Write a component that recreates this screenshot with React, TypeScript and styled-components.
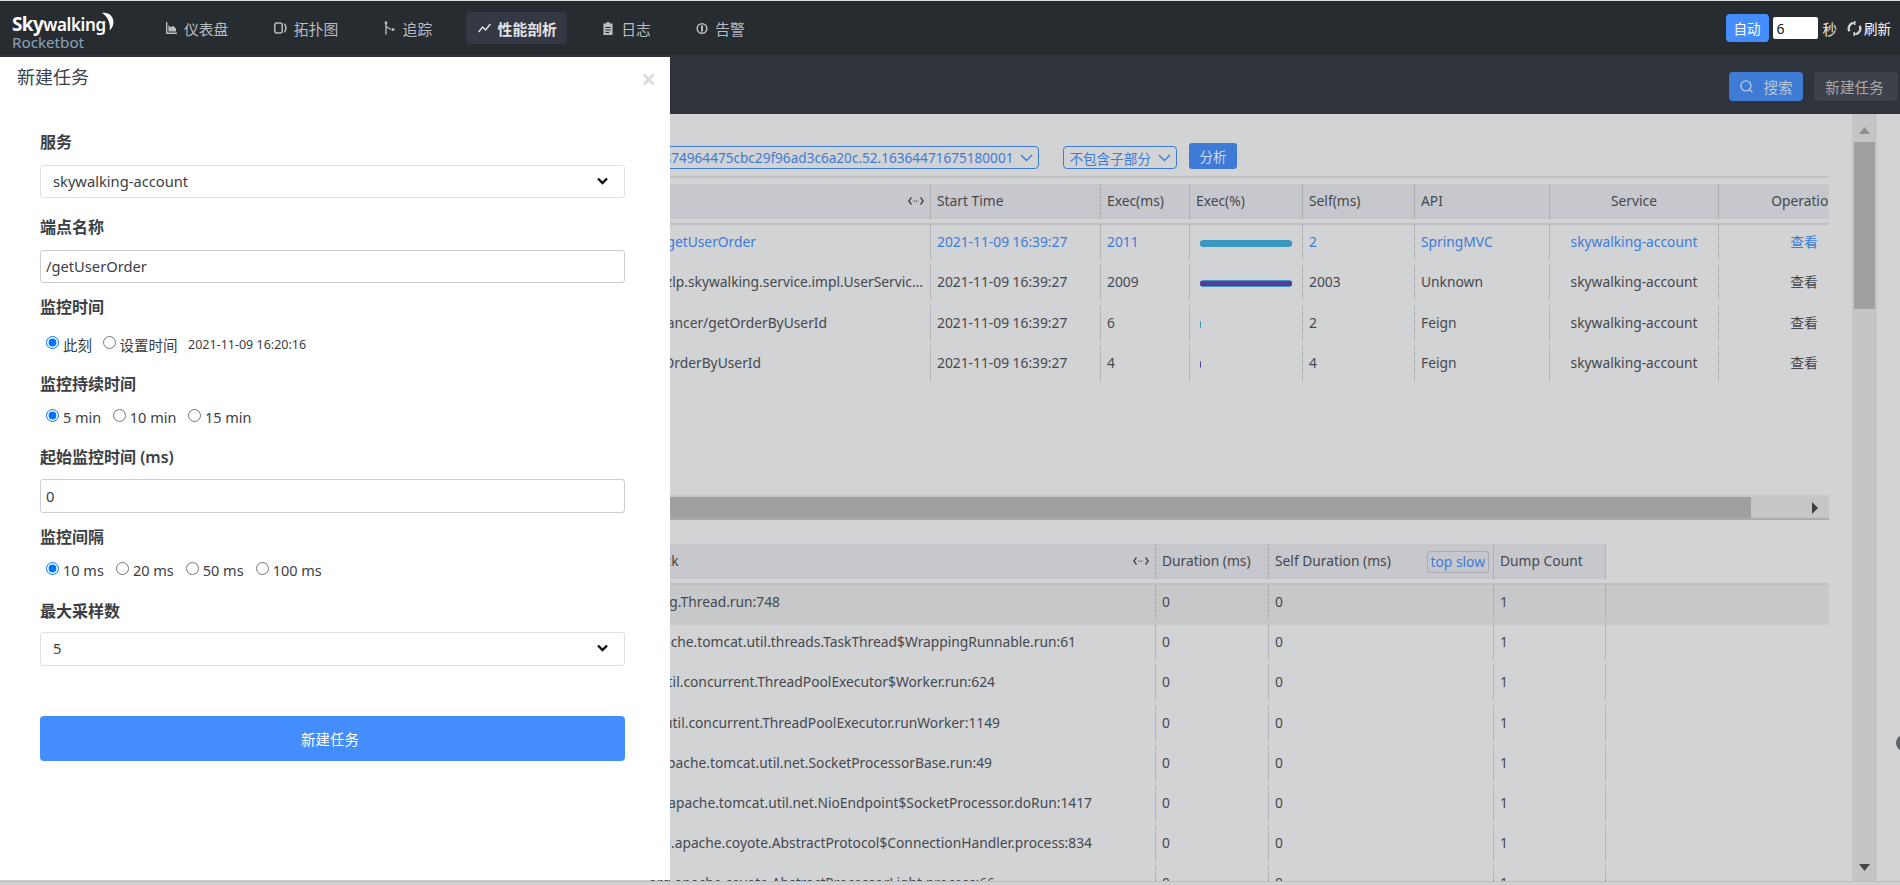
import React from "react";
import styled, { createGlobalStyle } from "styled-components";
import { Search } from "lucide-react";

const FONT = `"Noto Sans", "Noto Sans CJK SC", sans-serif`;

const Global = createGlobalStyle`
  html, body { margin: 0; padding: 0; height: 100%; overflow: hidden; }
  body { font-family: ${FONT}; }
  * { box-sizing: border-box; }
`;

const Page = styled.div`
  position: relative;
  width: 1900px;
  height: 885px;
  overflow: hidden;
  display: flex;
  flex-direction: column;
  background: #d2d3d5;
`;

/* ---------- top navigation ---------- */
const NavBar = styled.header`
  height: 55px;
  flex: none;
  background: #272c31;
  border-top: 1px solid #dcdcdc;
  display: flex;
  align-items: center;
  padding: 0 9px 0 12px;
`;
const Logo = styled.div`
  position: relative;
  width: 100px;
  margin-right: 41px;
  display: flex;
  flex-direction: column;
  padding-top: 6px;
`;
const LogoName = styled.div`
  font-size: 19px;
  font-weight: 700;
  color: #fff;
  line-height: 20px;
  letter-spacing: -0.6px;
  white-space: nowrap;
  small { font-size: 17px; font-weight: 600; letter-spacing: -0.4px; }
`;
const LogoSub = styled.div`
  font-size: 15.2px;
  line-height: 14px;
  color: #8ba3ba;
  white-space: nowrap;
`;
const Moon = styled.svg`
  position: absolute;
  right: -2px;
  top: 4px;
`;
const NavList = styled.nav`
  display: flex;
  gap: 23.4px;
  flex: 1;
`;
const NavItem = styled.a<{ $active?: boolean }>`
  height: 32px;
  display: flex;
  align-items: center;
  gap: 7px;
  padding: 0 10px 0 12px;
  border-radius: 4px;
  font-size: 14.8px;
  color: ${(p) => (p.$active ? "#e2e3e5" : "#b9bbbe")};
  font-weight: ${(p) => (p.$active ? 600 : 400)};
  background: ${(p) => (p.$active ? "#333844" : "transparent")};
  white-space: nowrap;
`;
const AutoButton = styled.button`
  width: 43px;
  height: 28px;
  border: 0;
  border-radius: 4px;
  background: #448dfe;
  color: #fff;
  font: 13.500px ${FONT};
  padding: 0;
`;
const SecondsInput = styled.input`
  width: 45px;
  height: 22px;
  margin-left: 4px;
  border: 0;
  border-radius: 2px;
  padding: 0 4px;
  background: #fff;
  color: #111;
  font: 14px ${FONT};
  outline: none;
`;
const Unit = styled.span`
  margin-left: 5px;
  font-size: 14.500px;
  color: #e6e6e6;
`;
const Refresh = styled.span`
  margin-left: 10px;
  display: flex;
  align-items: center;
  gap: 2px;
  font-size: 13.500px;
  color: #fff;
`;

/* ---------- second toolbar ---------- */
const ToolBar = styled.div`
  height: 59px;
  flex: none;
  background: #2f343c;
  display: flex;
  align-items: flex-start;
  justify-content: flex-end;
  gap: 11px;
  padding: 17px 2px 0 0;
`;
const ToolButton = styled.button<{ $primary?: boolean }>`
  height: 29px;
  width: ${(p) => (p.$primary ? 74 : 84)}px;
  border: 0;
  border-radius: 4px;
  background: ${(p) => (p.$primary ? "#3d7bd5" : "#3d414a")};
  color: ${(p) => (p.$primary ? "#b9c6da" : "#a6a8ac")};
  font: 14.6px ${FONT};
  display: flex;
  align-items: center;
  justify-content: center;
  gap: 9px;
  padding: ${(p) => (p.$primary ? "0" : "0 3px 0 0")};
`;

/* ---------- main area ---------- */
const Main = styled.main`
  flex: 1;
  min-height: 0;
  display: flex;
`;
const Content = styled.div`
  width: 1829px;
  min-width: 0;
  padding-left: 20px;
  overflow: hidden;
`;
const SelectRow = styled.div`
  height: 64px;
  border-bottom: 2px solid #bfc0c3;
  display: flex;
  align-items: flex-start;
  justify-content: flex-end;
  padding: 29px 592px 0 0;
`;
const Picker = styled.div<{ $gap: number }>`
  height: 23px;
  margin-top: 3px;
  margin-right: ${(p) => p.$gap}px;
  border: 1px solid #3d7bd5;
  border-radius: 4px;
  color: #3d7bd5;
  font-size: 13.600px;
  padding: 0 5px;
  display: flex;
  align-items: center;
  gap: 7px;
  white-space: nowrap;
`;
const AnalyzeButton = styled.button`
  width: 48px;
  height: 26px;
  border: 0;
  border-radius: 3px;
  background: #3d7bd5;
  color: #cfdbed;
  font: 13.600px ${FONT};
  padding: 0;
`;
const TablePane = styled.div<{ $height: number; $pad: number }>`
  height: ${(p) => p.$height}px;
  overflow: hidden;
  padding-top: ${(p) => p.$pad}px;
`;
const Grid = styled.div<{ $cols: string }>`
  display: grid;
  grid-template-columns: ${(p) => p.$cols};
  width: max-content;
`;
const HeadWrap = styled.div`
  height: 41px;
  border-bottom: 2px solid #bfc0c3;
  min-width: 1809px;
`;
const HeadCell = styled.div<{ $center?: boolean; $blank?: boolean }>`
  height: 35px;
  background: ${(p) => (p.$blank ? "transparent" : "#c7c8cd")};
  border-left: 1px dotted #97989b;
  color: #45484e;
  font-size: 13.800px;
  padding: 0 6px 2px;
  display: flex;
  align-items: center;
  justify-content: ${(p) => (p.$center ? "center" : "flex-start")};
  white-space: nowrap;
`;
const HeadMain = styled(HeadCell)<{ $lead: number }>`
  border-left: 0;
  justify-content: space-between;
  padding-left: ${(p) => p.$lead}px;
`;
const HeadWithButton = styled(HeadCell)`
  justify-content: space-between;
  padding-right: 4px;
`;
const TopSlow = styled.span`
  height: 22px;
  margin-top: 3px;
  padding: 0 3px;
  border: 1px solid #a7a9af;
  border-radius: 3px;
  color: #3d7bd5;
  font-size: 13.800px;
  line-height: 20px;
`;
const Row = styled.div<{ $cols: string; $active?: boolean; $hot?: boolean; $h: number }>`
  display: grid;
  grid-template-columns: ${(p) => p.$cols};
  width: max-content;
  min-width: 1809px;
  height: ${(p) => p.$h}px;
  color: ${(p) => (p.$active ? "#3d7bd5" : "#45484e")};
  background: ${(p) => (p.$hot ? "#c7c8ca" : "transparent")};
`;
const Cell = styled.div<{ $center?: boolean }>`
  height: 35px;
  border-left: 1px dotted #97989b;
  font-size: 13.800px;
  padding: 0 6px;
  line-height: 34px;
  white-space: nowrap;
  overflow: hidden;
  text-align: ${(p) => (p.$center ? "center" : "left")};
`;
const NameCell = styled.div<{ $end: number }>`
  height: 35px;
  font-size: 13.800px;
  line-height: 34px;
  white-space: nowrap;
  display: flex;
  justify-content: flex-end;
  padding-right: ${(p) => p.$end}px;
`;
const BarCell = styled(Cell)`
  display: flex;
  align-items: center;
  padding: 2px 0 0 10px;
`;
const BarTrack = styled.div`
  width: 92px;
  height: 7px;
`;
const BarValue = styled.div`
  min-width: 1px;
  height: 100%;
  padding: 1px 0;
  border-radius: 4px;
  overflow: hidden;
  background: #3a97bd;
`;
const BarCore = styled.div<{ $tone: string }>`
  height: 100%;
  background: ${(p) => p.$tone};
`;
const HScroll = styled.div`
  height: 25px;
  background: #c5c6c8;
  border-bottom: 2px solid #aaabad;
  padding-top: 2px;
  display: flex;
  align-items: flex-start;
`;
const HThumb = styled.div`
  width: 1731px;
  height: 21px;
  background: #9fa0a2;
`;
const HArrow = styled.svg`
  margin: 5px 0 0 61px;
`;
const VScroll = styled.div`
  width: 25px;
  margin-left: 23px;
  flex: none;
  background: #c4c5c7;
  padding: 13px 2px 0;
  display: flex;
  flex-direction: column;
  align-items: center;
`;
const VThumb = styled.div`
  width: 21px;
  height: 167px;
  margin-top: 8px;
  background: #9fa0a2;
`;
const VArrowDown = styled.svg`
  margin-top: auto;
  margin-bottom: 10px;
`;
const BottomStrip = styled.div`
  height: 4px;
  flex: none;
  background: #cfd0d2;
  border-top: 1px solid #bdbec0;
  position: relative;
  z-index: 3;
`;
const EdgeHandle = styled.div`
  position: absolute;
  left: 1896px;
  top: 735px;
  width: 16px;
  height: 16px;
  border-radius: 50%;
  background: #5d6368;
`;

/* ---------- drawer ---------- */
const Drawer = styled.aside`
  position: absolute;
  left: 0;
  top: 57px;
  width: 670px;
  height: 823px;
  background: #fff;
  z-index: 2;
  padding: 0 45px 0 40px;
`;
const DrawerHead = styled.div`
  height: 73px;
  margin: 0 -31px 0 -23px;
  display: flex;
  justify-content: space-between;
  align-items: flex-start;
  color: #3d4148;
`;
const DrawerTitle = styled.div`
  font-size: 18px;
  line-height: 40px;
`;
const Close = styled.span`
  font-size: 26px;
  font-weight: 700;
  line-height: 44px;
  color: #dcdcdc;
`;
const Label = styled.label<{ $mt: number }>`
  display: block;
  margin-top: ${(p) => p.$mt}px;
  height: 24px;
  font-size: 16px;
  line-height: 24px;
  font-weight: 600;
  color: #3a3e45;
  white-space: nowrap;
`;
const SelectBox = styled.div<{ $mt: number; $h: number }>`
  margin-top: ${(p) => p.$mt}px;
  height: ${(p) => p.$h}px;
  border: 1px solid #dfe0e2;
  border-radius: 3px;
  padding: 0 16px 2px 12px;
  display: flex;
  align-items: center;
  justify-content: space-between;
  font-size: 14.700px;
  color: #3a3e45;
`;
const TextInput = styled.input<{ $mt: number; $h: number }>`
  display: block;
  width: 100%;
  margin-top: ${(p) => p.$mt}px;
  height: ${(p) => p.$h}px;
  border: 1px solid #cdcdcd;
  border-radius: 3px;
  padding: 0 5px 1px;
  font: 14.700px ${FONT};
  color: #3a3e45;
  outline: none;
`;
const RadioRow = styled.div<{ $mt: number; $gap: number }>`
  margin-top: ${(p) => p.$mt}px;
  height: 20px;
  padding-left: 6px;
  display: flex;
  align-items: center;
  gap: ${(p) => p.$gap}px;
  font-size: 14.500px;
  color: #3a3e45;
`;
const RadioOption = styled.label`
  display: flex;
  align-items: center;
  gap: 4px;
  white-space: nowrap;
  input { width: 13px; height: 13px; margin: 0 0 3px; }
`;
const DateText = styled.span`
  font-size: 12.500px;
`;
const SubmitButton = styled.button`
  display: block;
  width: 100%;
  margin-top: 50px;
  height: 45px;
  border: 0;
  border-radius: 4px;
  padding: 0 5px 0 0;
  background: #448dfe;
  color: #fff;
  font: 14.500px ${FONT};
`;

/* ---------- icons ---------- */
const C = "#b9bbbe";
const DashIcon = () => (
  <svg width="12" height="12" viewBox="0 0 12 12"><path d="M1 0h1.400v10.500H12V12H1z" fill={C} /><path d="M3.400 9.600V3l2.400 2.200L8 3.800l3 2.800v3z" fill={C} /></svg>
);
const TopoIcon = () => (
  <svg width="13" height="12" viewBox="0 0 13 12" fill="none" stroke={C} strokeWidth="1.500"><rect x="0.800" y="1" width="7.400" height="10" rx="2" /><path d="M10.400 1.600c1.800 2.600 1.800 6.200 0 8.800" /></svg>
);
const TraceIcon = () => (
  <svg width="12" height="14" viewBox="0 0 12 14" fill="none" stroke={C} strokeWidth="1.400"><path d="M2 0.500v13M2 5.500l5 3" /><circle cx="9" cy="8.600" r="1.500" fill={C} stroke="none" /><circle cx="2" cy="2" r="1.400" fill={C} stroke="none" /></svg>
);
const ProfileIcon = () => (
  <svg width="13" height="10" viewBox="0 0 13 10" fill="none" stroke="#e2e3e5" strokeWidth="1.500"><path d="M0.600 9l4-5 3 3 4.800-6" /></svg>
);
const LogIcon = () => (
  <svg width="12" height="13" viewBox="0 0 12 13"><path fillRule="evenodd" d="M1.400 1.600h2.400C4 .7 4.900 0 6 0s2 .7 2.200 1.600h2.400V13H1.400zM3.400 5v1h5.200V5zm0 2.500v1h5.200v-1zm0 2.500v1h3.600v-1z" fill={C} /></svg>
);
const AlarmIcon = () => (
  <svg width="12" height="13" viewBox="0 0 12 13" fill="none" stroke={C}><circle cx="6" cy="6.500" r="4.800" strokeWidth="1.500" /><path d="M6 3.600v5.800" strokeWidth="2" /></svg>
);
const RefreshIcon = () => (
  <svg width="15" height="15" viewBox="0 0 15 15" fill="none" stroke="#d4d4d4" strokeWidth="2.400"><path d="M2.300 10.200A6 6 0 0 1 6 1.800" /><path d="M12.700 4.800A6 6 0 0 1 9 13.200" /><path d="M8 0l-1.600 2L8 4z" fill="#d4d4d4" strokeWidth="1" /><path d="M7 15l1.600-2L7 11z" fill="#d4d4d4" strokeWidth="1" /></svg>
);
const Chevron = () => (
  <svg width="11" height="8" viewBox="0 0 11 8" fill="none" stroke="#111" strokeWidth="2.400"><path d="M1 1.500l4.500 4.500L10 1.500" /></svg>
);
const ThinChevron = () => (
  <svg width="13" height="8" viewBox="0 0 13 8" fill="none" stroke="#3d7bd5" strokeWidth="1.400"><path d="M1 1l5.500 5.500L12 1" /></svg>
);
const Resizer = () => (
  <svg width="16" height="10" viewBox="0 0 16 10" fill="none" stroke="#3f4248" strokeWidth="1.300"><path d="M3.500 1.500L.8 5l2.700 3.500M12.500 1.500L15.200 5l-2.700 3.500" /><path d="M5.500 5.200h5" strokeDasharray="1.200 1.200" /></svg>
);

/* ---------- data ---------- */
const TOP_COLS = "910px 170px 89px 113px 112px 135px 169px 171px";
const STACK_COLS = "1135px 113px 225px 112px 1fr";

const spans = [
  { name: "/getUserOrder", end: 174, exec: "2011", pct: 100, tone: "#3a97bd", self: "2", api: "SpringMVC", active: true },
  { name: "com.zlp.skywalking.service.impl.UserServic...", end: 7, exec: "2009", pct: 100, tone: "#5b3a9a", self: "2003", api: "Unknown" },
  { name: "/loadbalancer/getOrderByUserId", end: 103, exec: "6", pct: 1, tone: "#3a97bd", self: "2", api: "Feign" },
  { name: "/getOrderByUserId", end: 169, exec: "4", pct: 1, tone: "#5b3a9a", self: "4", api: "Feign" },
];
const stacks = [
  { name: "java.lang.Thread.run:748", end: 375 },
  { name: "org.apache.tomcat.util.threads.TaskThread$WrappingRunnable.run:61", end: 79 },
  { name: "java.util.concurrent.ThreadPoolExecutor$Worker.run:624", end: 160 },
  { name: "java.util.concurrent.ThreadPoolExecutor.runWorker:1149", end: 155 },
  { name: "org.apache.tomcat.util.net.SocketProcessorBase.run:49", end: 163 },
  { name: "org.apache.tomcat.util.net.NioEndpoint$SocketProcessor.doRun:1417", end: 63 },
  { name: "org.apache.coyote.AbstractProtocol$ConnectionHandler.process:834", end: 63 },
  { name: "org.apache.coyote.AbstractProcessorLight.process:66", end: 160 },
];

const RadioGroup = ({ name, options }: { name: string; options: string[] }) => (
  <>
    {options.map((o, i) => (
      <RadioOption key={o}>
        <input type="radio" name={name} defaultChecked={i === 0} />
        {o}
      </RadioOption>
    ))}
  </>
);

export default function App() {
  return (
    <Page>
      <Global />
      <NavBar>
        <Logo>
          <LogoName>Sky<small>walking</small></LogoName>
          <LogoSub>Rocketbot</LogoSub>
          <Moon width="14" height="19" viewBox="0 0 14 19"><path d="M2 1C8 -.5 14 4 13.400 11c-.3 3-1.600 5.600-4 7.500C11 13 8.500 5 2 1z" fill="#fff" /></Moon>
        </Logo>
        <NavList>
          <NavItem><DashIcon />仪表盘</NavItem>
          <NavItem><TopoIcon />拓扑图</NavItem>
          <NavItem><TraceIcon />追踪</NavItem>
          <NavItem $active><ProfileIcon />性能剖析</NavItem>
          <NavItem><LogIcon />日志</NavItem>
          <NavItem><AlarmIcon />告警</NavItem>
        </NavList>
        <AutoButton>自动</AutoButton>
        <SecondsInput defaultValue="6" />
        <Unit>秒</Unit>
        <Refresh><RefreshIcon />刷新</Refresh>
      </NavBar>

      <ToolBar>
        <ToolButton $primary><Search size={15} strokeWidth={2.2} />搜索</ToolButton>
        <ToolButton>新建任务</ToolButton>
      </ToolBar>

      <Main>
        <Content>
          <SelectRow>
            <Picker $gap={24}>3a1c0e874964475cbc29f96ad3c6a20c.52.16364471675180001<ThinChevron /></Picker>
            <Picker $gap={12}>不包含子部分<ThinChevron /></Picker>
            <AnalyzeButton>分析</AnalyzeButton>
          </SelectRow>
          <TablePane $height={317} $pad={6}>
            <HeadWrap>
              <Grid $cols={TOP_COLS}>
                <HeadMain $lead={6}><span>Span</span><Resizer /></HeadMain>
                <HeadCell>Start Time</HeadCell>
                <HeadCell>Exec(ms)</HeadCell>
                <HeadCell>Exec(%)</HeadCell>
                <HeadCell>Self(ms)</HeadCell>
                <HeadCell>API</HeadCell>
                <HeadCell $center>Service</HeadCell>
                <HeadCell $center>Operation</HeadCell>
              </Grid>
            </HeadWrap>
            {spans.map((s) => (
              <Row key={s.name} $cols={TOP_COLS} $active={s.active} $h={40.33}>
                <NameCell $end={s.end}>{s.name}</NameCell>
                <Cell>2021-11-09 16:39:27</Cell>
                <Cell>{s.exec}</Cell>
                <BarCell>
                  <BarTrack>
                    <BarValue style={{ width: `${s.pct}%` }}><BarCore $tone={s.tone} /></BarValue>
                  </BarTrack>
                </BarCell>
                <Cell>{s.self}</Cell>
                <Cell>{s.api}</Cell>
                <Cell $center>skywalking-account</Cell>
                <Cell $center>查看</Cell>
              </Row>
            ))}
          </TablePane>
          <HScroll>
            <HThumb />
            <HArrow width="7" height="12" viewBox="0 0 7 12"><path d="M0 0l6 6-6 6z" fill="#3c3e42" /></HArrow>
          </HScroll>
          <TablePane $height={400} $pad={24}>
            <HeadWrap>
              <Grid $cols={STACK_COLS}>
                <HeadMain $lead={575}><span>Thread Stack</span><Resizer /></HeadMain>
                <HeadCell>Duration (ms)</HeadCell>
                <HeadWithButton>Self Duration (ms)<TopSlow>top slow</TopSlow></HeadWithButton>
                <HeadCell>Dump Count</HeadCell>
                <HeadCell $blank />
              </Grid>
            </HeadWrap>
            {stacks.map((s, i) => (
              <Row key={s.name} $cols={STACK_COLS} $hot={i === 0} $h={40.2}>
                <NameCell $end={s.end}>{s.name}</NameCell>
                <Cell>0</Cell>
                <Cell>0</Cell>
                <Cell>1</Cell>
                <Cell />
              </Row>
            ))}
          </TablePane>
        </Content>
        <VScroll>
          <svg width="11" height="7" viewBox="0 0 11 7"><path d="M5.500 0L11 7H0z" fill="#8e8f91" /></svg>
          <VThumb />
          <VArrowDown width="11" height="7" viewBox="0 0 11 7"><path d="M0 0h11L5.500 7z" fill="#45474b" /></VArrowDown>
        </VScroll>
      </Main>
      <BottomStrip />
      <EdgeHandle />

      <Drawer>
        <DrawerHead>
          <DrawerTitle>新建任务</DrawerTitle>
          <Close>×</Close>
        </DrawerHead>
        <Label $mt={0}>服务</Label>
        <SelectBox $mt={11} $h={33}>skywalking-account<Chevron /></SelectBox>
        <Label $mt={17}>端点名称</Label>
        <TextInput $mt={11} $h={33} defaultValue="/getUserOrder" />
        <Label $mt={12}>监控时间</Label>
        <RadioRow $mt={15} $gap={10.5}>
          <RadioGroup name="when" options={["此刻", "设置时间"]} />
          <DateText>2021-11-09 16:20:16</DateText>
        </RadioRow>
        <Label $mt={18}>监控持续时间</Label>
        <RadioRow $mt={11} $gap={11.5}><RadioGroup name="dur" options={["5 min", "10 min", "15 min"]} /></RadioRow>
        <Label $mt={18}>起始监控时间 (ms)</Label>
        <TextInput $mt={10} $h={34} defaultValue="0" />
        <Label $mt={12}>监控间隔</Label>
        <RadioRow $mt={11} $gap={12}><RadioGroup name="gap" options={["10 ms", "20 ms", "50 ms", "100 ms"]} /></RadioRow>
        <Label $mt={19}>最大采样数</Label>
        <SelectBox $mt={9} $h={34}>5<Chevron /></SelectBox>
        <SubmitButton>新建任务</SubmitButton>
      </Drawer>
    </Page>
  );
}
